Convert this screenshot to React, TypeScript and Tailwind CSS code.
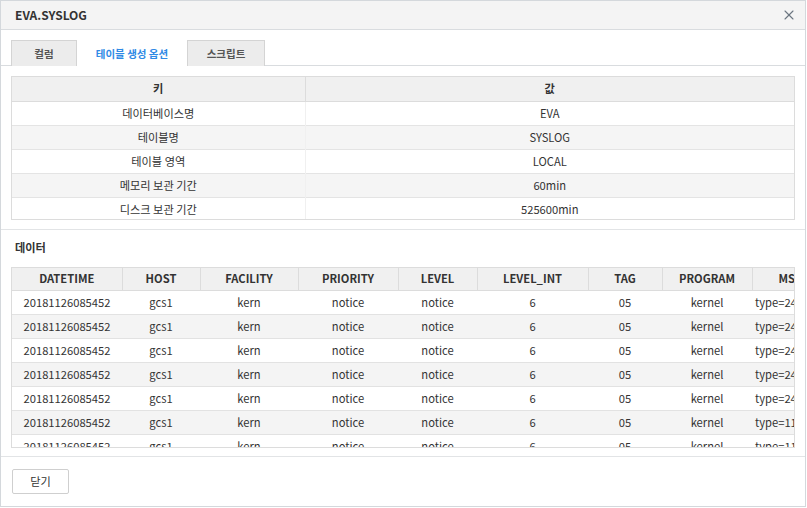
import { X } from 'lucide-react';

const font = { fontFamily: '"Noto Sans CJK KR", "Noto Sans", sans-serif' };

const keyRows = [
  ['데이터베이스명', 'EVA'],
  ['테이블명', 'SYSLOG'],
  ['테이블 영역', 'LOCAL'],
  ['메모리 보관 기간', '60min'],
  ['디스크 보관 기간', '525600min'],
];

const columns = [
  { name: 'DATETIME', w: 110 },
  { name: 'HOST', w: 78 },
  { name: 'FACILITY', w: 98 },
  { name: 'PRIORITY', w: 100 },
  { name: 'LEVEL', w: 79 },
  { name: 'LEVEL_INT', w: 111 },
  { name: 'TAG', w: 74 },
  { name: 'PROGRAM', w: 90 },
  { name: 'MSG', w: 300 },
];

const msgs = ['type=2404 audit', 'type=2404 audit', 'type=2404 audit', 'type=2404 audit', 'type=2404 audit', 'type=1105 audit', 'type=1105 audit', 'type=1105 audit'];

export default function App() {
  return (
    <div className="w-[807px] h-[508px] bg-white" style={font}>
      <div className="w-[806px] h-[507px] border border-[#d4d8dc] flex flex-col text-[#333]">
        {/* header */}
        <div className="h-[29px] shrink-0 bg-[#f4f4f4] border-b border-[#d9dcdf] flex items-center justify-between pl-[14px] pr-[8px]">
          <span className="text-[12px] font-bold text-[#333]">EVA.SYSLOG</span>
          <X size={16} strokeWidth={1.6} className="text-[#6b7580]" />
        </div>

        {/* table options */}
        <div className="border-b border-[#e2e4e6] pb-[9px]">
          <div className="flex pt-[10px] pl-[10px] border-b border-[#d9dcdf] h-[36px]">
            <div className="w-[66px] h-[26px] bg-[#ececec] border border-[#d4d4d4] border-b-0 flex items-center justify-center text-[10.5px] font-bold text-[#555]">컬럼</div>
            <div className="w-[110px] h-[27px] bg-white flex items-center justify-center text-[10.5px] font-bold text-[#2f8ae5] -mb-px">테이블 생성 옵션</div>
            <div className="w-[78px] h-[26px] bg-[#ececec] border border-[#d4d4d4] border-b-0 flex items-center justify-center text-[10.5px] font-bold text-[#555]">스크립트</div>
          </div>
          <div className="mx-[10px] mt-[10px] h-[144px] overflow-hidden border border-[#dcdcdc]">
            <table className="w-full table-fixed border-collapse text-[11.2px]">
              <colgroup>
                <col className="w-[293px]" />
                <col />
              </colgroup>
              <thead>
                <tr className="h-[24px] bg-[#f0f0f0]">
                  <th className="font-bold border-r border-b border-[#dcdcdc]">키</th>
                  <th className="font-bold border-b border-[#dcdcdc]">값</th>
                </tr>
              </thead>
              <tbody>
                {keyRows.map(([k, v], i) => (
                  <tr key={k} className={`h-[24px] border-b border-[#e4e4e4] ${i % 2 === 1 ? 'bg-[#f5f5f5]' : 'bg-white'}`}>
                    <td className="text-center border-r border-[#f0f0f0]">{k}</td>
                    <td className="text-center">{v}</td>
                  </tr>
                ))}
              </tbody>
            </table>
          </div>
        </div>

        {/* data */}
        <div className="flex-1 border-b border-[#e2e4e6] px-[10px] pt-[9px]">
          <div className="text-[11.2px] font-bold h-[16px] leading-[16px] pl-[4px]">데이터</div>
          <div className="mt-[12px] h-[181px] overflow-hidden border border-[#dcdcdc]">
            <table className="table-fixed border-collapse text-[11.2px] w-[1040px]">
              <colgroup>
                {columns.map((c) => (
                  <col key={c.name} style={{ width: c.w }} />
                ))}
              </colgroup>
              <thead>
                <tr className="h-[22px] bg-[#f0f0f0]">
                  {columns.map((c, i) => (
                    <th key={c.name} className={`font-bold border-r border-b border-[#dcdcdc] whitespace-nowrap ${i === 8 ? 'text-left pl-[26px]' : 'text-center'}`}>
                      {c.name}
                    </th>
                  ))}
                </tr>
              </thead>
              <tbody>
                {msgs.map((m, i) => (
                  <tr key={i} className={`h-[24px] border-b border-[#e2e2e2] ${i % 2 === 1 ? 'bg-[#f4f4f4]' : 'bg-white'}`}>
                    <td className="text-center">20181126085452</td>
                    <td className="text-center">gcs1</td>
                    <td className="text-center">kern</td>
                    <td className="text-center">notice</td>
                    <td className="text-center">notice</td>
                    <td className="text-center">6</td>
                    <td className="text-center">05</td>
                    <td className="text-center">kernel</td>
                    <td className="text-left pl-[3px] whitespace-nowrap overflow-hidden">{m}</td>
                  </tr>
                ))}
              </tbody>
            </table>
          </div>
        </div>

        {/* footer */}
        <div className="h-[49px] shrink-0 flex items-center pl-[11px]">
          <button className="w-[57px] h-[25px] border border-[#cfcfcf] rounded-[2px] bg-white text-[11.2px] text-[#333]">닫기</button>
        </div>
      </div>
    </div>
  );
}
